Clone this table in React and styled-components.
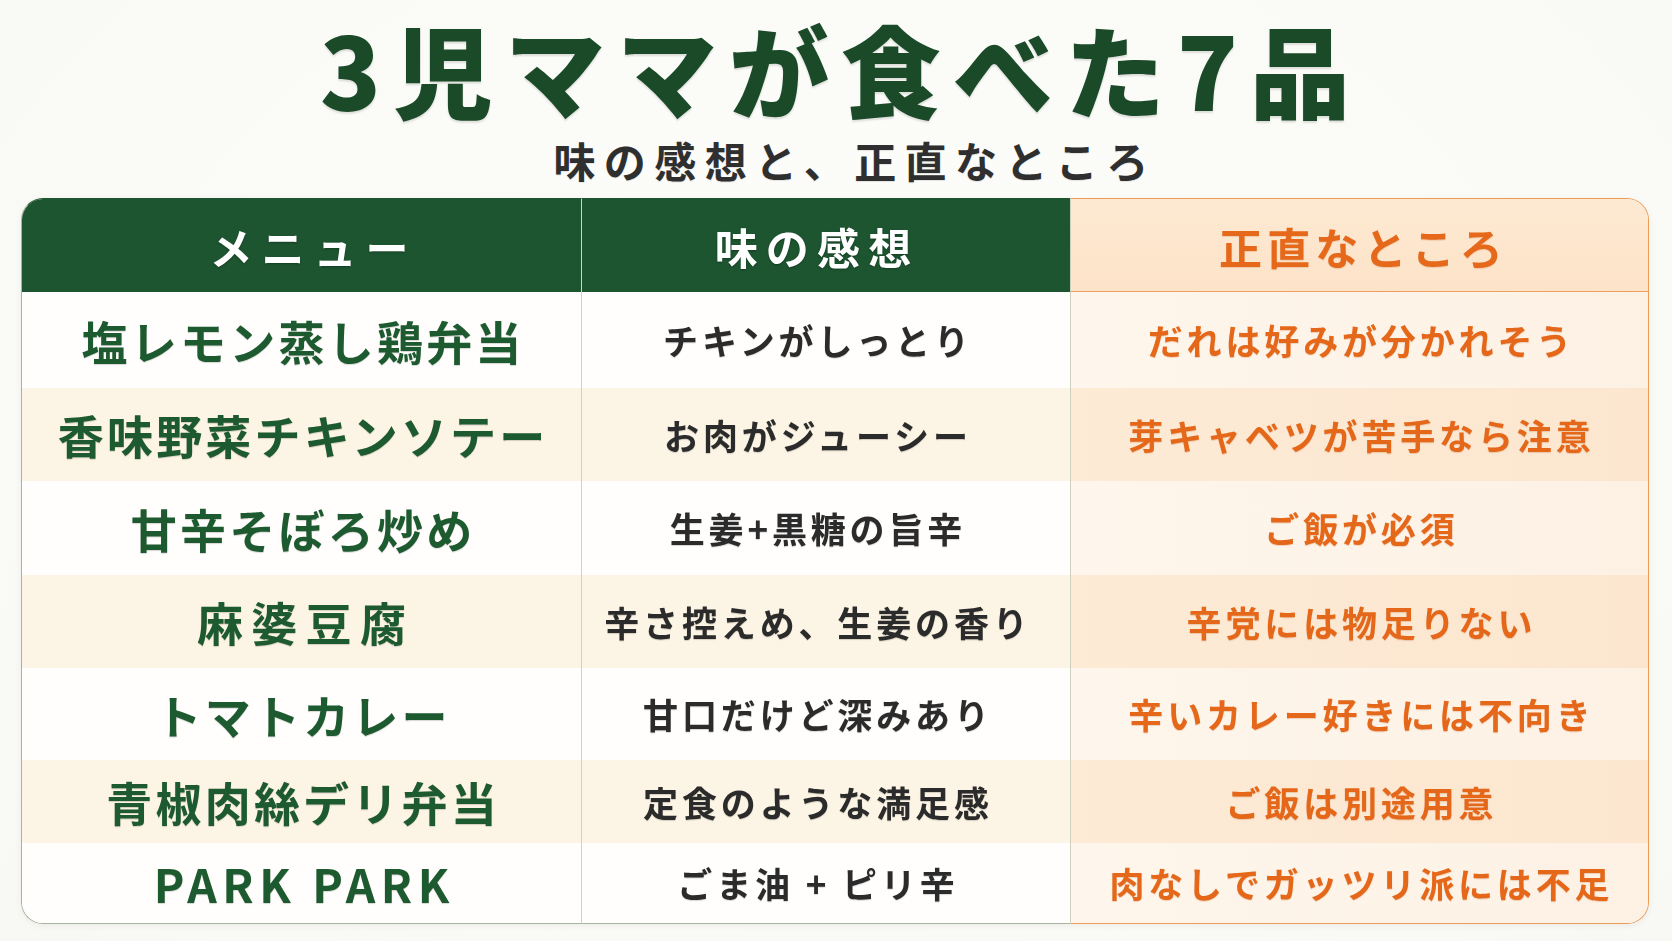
import React from "react";
import styled, { createGlobalStyle } from "styled-components";

const GlobalStyle = createGlobalStyle`
  html, body {
    margin: 0;
    padding: 0;
    background: #fafaf7;
  }
  body {
    font-family: "Noto Sans CJK JP", "Noto Sans", sans-serif;
  }
`;

const Page = styled.div`
  width: 1672px;
  height: 941px;
  box-sizing: border-box;
  padding: 18px 23px 0 21px;
  display: flex;
  flex-direction: column;
  align-items: center;
  background: radial-gradient(ellipse at 50% 40%, #fdfdfb 0%, #f8f8f4 100%);
  overflow: hidden;
`;

const Title = styled.h1`
  margin: 0 -0.12em 0 0;
  font-size: 100px;
  line-height: 1;
  font-weight: 900;
  letter-spacing: 0.12em;
  color: #1b4a29;
  text-shadow: 0 2px 2px rgba(0, 0, 0, 0.12);
`;

const Subtitle = styled.h2`
  margin: 21px 0 0 40px;
  font-size: 42px;
  line-height: 1;
  font-weight: 700;
  letter-spacing: 0.2em;
  color: #2f2f2f;
  text-shadow: 0 1px 1px rgba(0, 0, 0, 0.1);
`;

const Table = styled.div`
  margin-top: 17px;
  width: 100%;
  display: flex;
  filter: drop-shadow(0 2px 3px rgba(0, 0, 0, 0.05));
`;

const TRACKS = "92.5px 96px 93px 94px 93px 92px 83px 80.5px";

const LeftBlock = styled.div`
  width: 560px;
  box-sizing: border-box;
  flex: none;
  display: grid;
  grid-template-columns: 1fr;
  grid-template-rows: ${TRACKS};
  border: 1.5px solid #aab3a2;
  border-top-color: #1d5530;
  border-right: none;
  border-radius: 22px 0 0 22px;
  overflow: hidden;
`;

const MidBlock = styled.div`
  width: 489px;
  box-sizing: border-box;
  flex: none;
  display: grid;
  grid-template-rows: ${TRACKS};
  border-top: 1.5px solid #1d5530;
  border-bottom: 1.5px solid #aab3a2;
  border-left: 1.5px solid #cfd3c5;
  overflow: hidden;
`;

const RightBlock = styled.div`
  flex: 1;
  box-sizing: border-box;
  display: grid;
  grid-template-rows: ${TRACKS};
  border: 1.5px solid #eb9d58;
  border-left: 1.5px solid #cdd0bf;
  border-radius: 0 22px 22px 0;
  overflow: hidden;
`;

const HeadCell = styled.div`
  display: flex;
  align-items: center;
  justify-content: center;
  box-sizing: border-box;
  font-size: 43px;
  font-weight: 700;
  letter-spacing: ${(p) => p.$spacing};
  padding: 2px ${(p) => p.$padR || "0px"} 0 ${(p) => p.$padL || "0px"};
  background: ${(p) => (p.$accent ? "linear-gradient(180deg, #fde9d2 0%, #fde3c8 100%)" : "#1d5530")};
  color: ${(p) => (p.$accent ? "#e6691b" : "#ffffff")};
  border-bottom: ${(p) => (p.$accent ? "1.5px solid #e9a060" : "none")};
  text-shadow: ${(p) => (p.$accent ? "0 1px 1px rgba(160,70,0,0.18)" : "0 1px 2px rgba(0,0,0,0.3)")};
`;

const Cell = styled.div`
  display: flex;
  align-items: center;
  justify-content: center;
  box-sizing: border-box;
  font-weight: 700;
  white-space: nowrap;
  font-size: ${(p) => (p.$kind === "menu" ? "46px" : "35px")};
  letter-spacing: ${(p) => (p.$kind === "menu" ? "0.07em" : "0.11em")};
  text-indent: ${(p) => (p.$kind === "menu" ? "0.07em" : "0.11em")};
  padding-right: ${(p) => (p.$kind === "taste" ? "20px" : "0")};
  color: ${(p) =>
    p.$kind === "menu" ? "#1d5a2f" : p.$kind === "note" ? "#e5681a" : "#2b2b2b"};
  background: ${(p) => {
    if (p.$kind === "note")
      return p.$even
        ? "linear-gradient(90deg, #fdebd6 0%, #fce6cf 100%)"
        : "linear-gradient(90deg, #fef6ec 0%, #fdf1e4 100%)";
    return p.$even ? "#fcf4e4" : "#fffefc";
  }};
  text-shadow: ${(p) =>
    p.$kind === "note" ? "0 1px 1px rgba(170,70,0,0.2)" : "0 1px 1px rgba(0,0,0,0.16)"};
`;

const rows = [
  ["塩レモン蒸し鶏弁当", "チキンがしっとり", "だれは好みが分かれそう"],
  ["香味野菜チキンソテー", "お肉がジューシー", "芽キャベツが苦手なら注意"],
  ["甘辛そぼろ炒め", "生姜+黒糖の旨辛", "ご飯が必須"],
  ["麻婆豆腐", "辛さ控えめ、生姜の香り", "辛党には物足りない"],
  ["トマトカレー", "甘口だけど深みあり", "辛いカレー好きには不向き"],
  ["青椒肉絲デリ弁当", "定食のような満足感", "ご飯は別途用意"],
  ["PARK PARK", "ごま油 + ピリ辛", "肉なしでガッツリ派には不足"],
];

const spacingOverride = { 麻婆豆腐: "0.18em", "PARK PARK": "0.12em" };

export default function App() {
  return (
    <>
      <GlobalStyle />
      <Page>
        <Title>3児ママが食べた7品</Title>
        <Subtitle>味の感想と、正直なところ</Subtitle>
        <Table>
          <LeftBlock>
            <HeadCell $spacing="0.21em" $padL="24px">メニュー</HeadCell>
            {rows.map((r, i) => (
              <Cell
                key={i}
                $kind="menu"
                $even={i % 2 === 1}
                style={
                  spacingOverride[r[0]]
                    ? { letterSpacing: spacingOverride[r[0]], textIndent: spacingOverride[r[0]] }
                    : undefined
                }
              >
                {r[0]}
              </Cell>
            ))}
          </LeftBlock>
          <MidBlock>
            <HeadCell $spacing="0.19em" $padR="18px">味の感想</HeadCell>
            {rows.map((r, i) => (
              <Cell key={i} $kind="taste" $even={i % 2 === 1}>
                {r[1]}
              </Cell>
            ))}
          </MidBlock>
          <RightBlock>
            <HeadCell $accent $spacing="0.12em" $padL="8px">正直なところ</HeadCell>
            {rows.map((r, i) => (
              <Cell key={i} $kind="note" $even={i % 2 === 1}>
                {r[2]}
              </Cell>
            ))}
          </RightBlock>
        </Table>
      </Page>
    </>
  );
}
